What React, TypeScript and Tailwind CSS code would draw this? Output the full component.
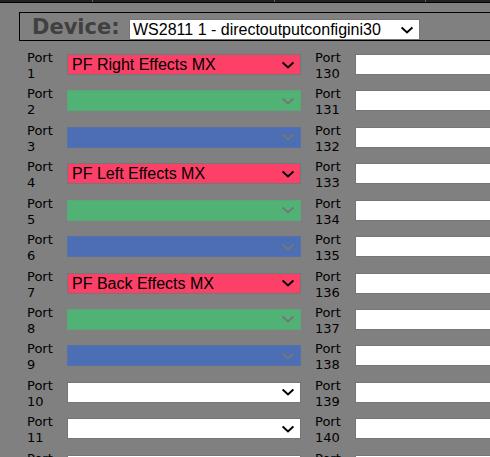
import React from 'react';
import { clsx } from 'clsx';

type Tone = 'red' | 'green' | 'blue' | 'white';

interface Port {
  id: number;
  effect: string;
  tone: Tone;
}

const tones: Record<Tone, string> = {
  red: 'bg-[#fc4067] border-[#767676]',
  green: 'bg-[#50b274] border-[#5aa676]',
  blue: 'bg-[#4c6eb4] border-[#5670a8]',
  white: 'bg-white border-[#767676]',
};

const rgb: Tone[] = ['red', 'green', 'blue'];
const effects: Record<number, string> = {
  1: 'PF Right Effects MX',
  4: 'PF Left Effects MX',
  7: 'PF Back Effects MX',
};

const rows = Array.from({ length: 12 }, (_, i) => i + 1);
const firstPorts: Port[] = rows.map((id) => ({
  id,
  effect: effects[id] ?? '',
  tone: id <= 9 ? rgb[(id - 1) % 3] : 'white',
}));
const secondPorts: Port[] = rows.map((n) => ({ id: n + 129, effect: '', tone: 'white' }));

function Chevron({ muted = false }: { muted?: boolean }) {
  return (
    <svg
      viewBox="0 0 12 8"
      aria-hidden="true"
      className={clsx(
        'pointer-events-none col-start-1 row-start-1 mr-[7px] h-2 w-3 self-center justify-self-end',
        muted ? 'text-[#767676]' : 'text-black',
      )}
    >
      <path d="M0.6 1.4 L6 6.4 L11.4 1.4" fill="none" stroke="currentColor" strokeWidth="2" />
    </svg>
  );
}

function PortRow({ port }: { port: Port }) {
  const disabled = port.tone === 'green' || port.tone === 'blue';
  const id = `port-${port.id}`;
  return (
    <div className="flex items-start">
      <label htmlFor={id} className="w-10 pr-2 text-[13px] leading-4">
        Port {port.id}
      </label>
      <div className="mt-1 grid w-[234px]">
        <select
          id={id}
          disabled={disabled}
          defaultValue={port.effect}
          className={clsx(
            'col-start-1 row-start-1 h-[21px] w-full appearance-none border pr-6 pl-1 font-["Liberation_Sans",Arial,sans-serif] text-base leading-[19px] text-black',
            tones[port.tone],
          )}
        >
          <option value={port.effect}>{port.effect}</option>
        </select>
        <Chevron muted={disabled} />
      </div>
    </div>
  );
}

function PortColumn({ ports }: { ports: Port[] }) {
  return (
    <div className="grid min-h-[437px] w-[274px] shrink-0 auto-rows-fr">
      {ports.map((port) => (
        <PortRow key={port.id} port={port} />
      ))}
    </div>
  );
}

export default function App() {
  return (
    <div className='h-screen overflow-hidden bg-[#808080] font-["DejaVu_Sans",Verdana,sans-serif] text-black'>
      <nav className="flex h-[3px] border-b border-black bg-[#222222]">
        <div className="w-[93px] border-r border-[#606060]" />
        <div className="w-[182px] border-r border-[#606060]" />
        <div className="w-[151px] border-r border-[#606060]" />
      </nav>
      <main className="pt-[9px] pl-[19px]">
        <div className="flex h-[29px] items-center border border-r-0 border-black pl-3">
          <label htmlFor="device" className="w-[97px] text-[21px] leading-7 font-bold text-[#404040]">
            Device:
          </label>
          <div className="mt-1.5 grid w-[291px]">
            <select
              id="device"
              className='col-start-1 row-start-1 h-[21px] w-full appearance-none border border-[#767676] bg-white pr-6 pl-[3px] font-["Liberation_Sans",Arial,sans-serif] text-base leading-[19px]'
            >
              <option>WS2811 1 - directoutputconfigini30</option>
            </select>
            <Chevron />
          </div>
        </div>
        <div className="flex gap-[14px] pt-[9px] pl-2">
          <PortColumn ports={firstPorts} />
          <PortColumn ports={secondPorts} />
        </div>
      </main>
    </div>
  );
}
